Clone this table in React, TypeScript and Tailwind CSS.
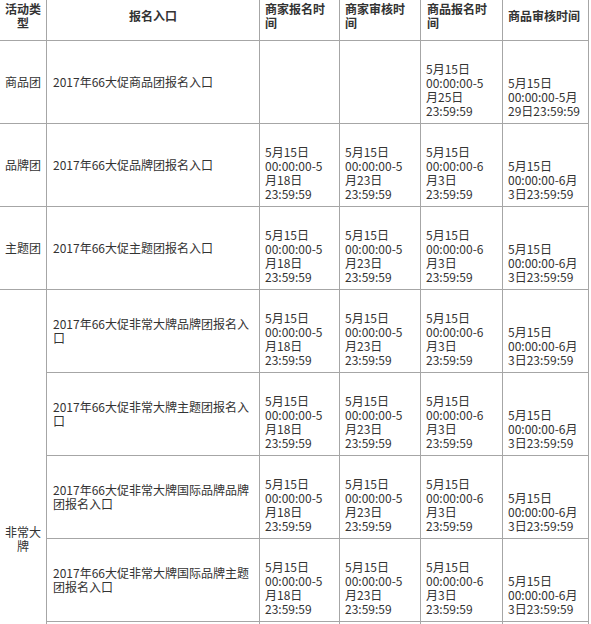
import React from 'react';

const font = { fontFamily: '"Noto Sans CJK SC", "Liberation Sans", sans-serif' };

const mDate = (m: string) => ['5月15日', `00:00:00-${m[0]}`, `月${m.slice(1)}日`, '23:59:59'];
const lastDate = (m: string, d: string) => ['5月15日', `00:00:00-${m}月`, `${d}日23:59:59`];

const brandDates = [mDate('518'), mDate('523'), ['5月15日', '00:00:00-6', '月3日', '23:59:59'], lastDate('6', '3')];
const blank = [[], [], [], []];

type Row = { type?: string; span?: boolean; name: string[]; dates: string[][] };

const rows: Row[] = [
  {
    type: '商品团',
    name: ['2017年66大促商品团报名入口'],
    dates: [[], [], ['5月15日', '00:00:00-5', '月25日', '23:59:59'], lastDate('5', '29')],
  },
  { type: '品牌团', name: ['2017年66大促品牌团报名入口'], dates: brandDates },
  { type: '主题团', name: ['2017年66大促主题团报名入口'], dates: brandDates },
  { type: '非常大牌', span: true, name: ['2017年66大促非常大牌品牌团报名入', '口'], dates: brandDates },
  { name: ['2017年66大促非常大牌主题团报名入', '口'], dates: brandDates },
  { name: ['2017年66大促非常大牌国际品牌品牌', '团报名入口'], dates: brandDates },
  { name: ['2017年66大促非常大牌国际品牌主题', '团报名入口'], dates: brandDates },
  // rows below the fold
  { name: [], dates: blank },
  { name: [], dates: blank },
];

const cell = 'border-r border-b border-[#a6a6a6]';

const Lines: React.FC<{ lines: string[] }> = ({ lines }) => (
  <>
    {lines.map((l, i) => (
      <div key={i} className="whitespace-nowrap">
        {l}
      </div>
    ))}
  </>
);

const App: React.FC = () => {
  return (
    <div className="h-[624px] w-[591px] overflow-hidden bg-white" style={font}>
      <div className="ml-[-1px] mt-[-10px] grid w-[590px] grid-cols-[47px_213px_80px_81px_82px_86px] grid-rows-[50px] auto-rows-[83px] border-l border-t border-[#a6a6a6] text-[12px] leading-[14px] text-[#333]">
        {/* header */}
        <div className={`${cell} flex flex-col items-center justify-center font-bold`}>
          <div>活动类</div>
          <div>型</div>
        </div>
        <div className={`${cell} flex items-center justify-center font-bold`}>报名入口</div>
        <div className={`${cell} flex flex-col justify-center pl-[5px] font-bold`}>
          <div>商家报名时</div>
          <div>间</div>
        </div>
        <div className={`${cell} flex flex-col justify-center pl-[5px] font-bold`}>
          <div>商家审核时</div>
          <div>间</div>
        </div>
        <div className={`${cell} flex flex-col justify-center pl-[6px] font-bold`}>
          <div>商品报名时</div>
          <div>间</div>
        </div>
        <div className={`${cell} flex flex-col justify-center pl-[5px] font-bold`}>
          <div>商品审核时间</div>
        </div>

        {/* body */}
        {rows.map((r, i) => (
          <React.Fragment key={i}>
            {r.type && (
              <div
                className={`${cell} flex flex-col items-center justify-center ${r.span ? 'row-span-6' : ''}`}
              >
                {r.type.length > 3 ? (
                  <>
                    <div>{r.type.slice(0, 3)}</div>
                    <div>{r.type.slice(3)}</div>
                  </>
                ) : (
                  <div>{r.type}</div>
                )}
              </div>
            )}
            <div className={`${cell} flex flex-col justify-center pl-[6px]`}>
              <Lines lines={r.name} />
            </div>
            {r.dates.map((d, j) => (
              <div key={j} className={`${cell} flex flex-col justify-end pb-[5px] pl-[5px]`}>
                <Lines lines={d} />
              </div>
            ))}
          </React.Fragment>
        ))}
      </div>
    </div>
  );
};

export default App;
